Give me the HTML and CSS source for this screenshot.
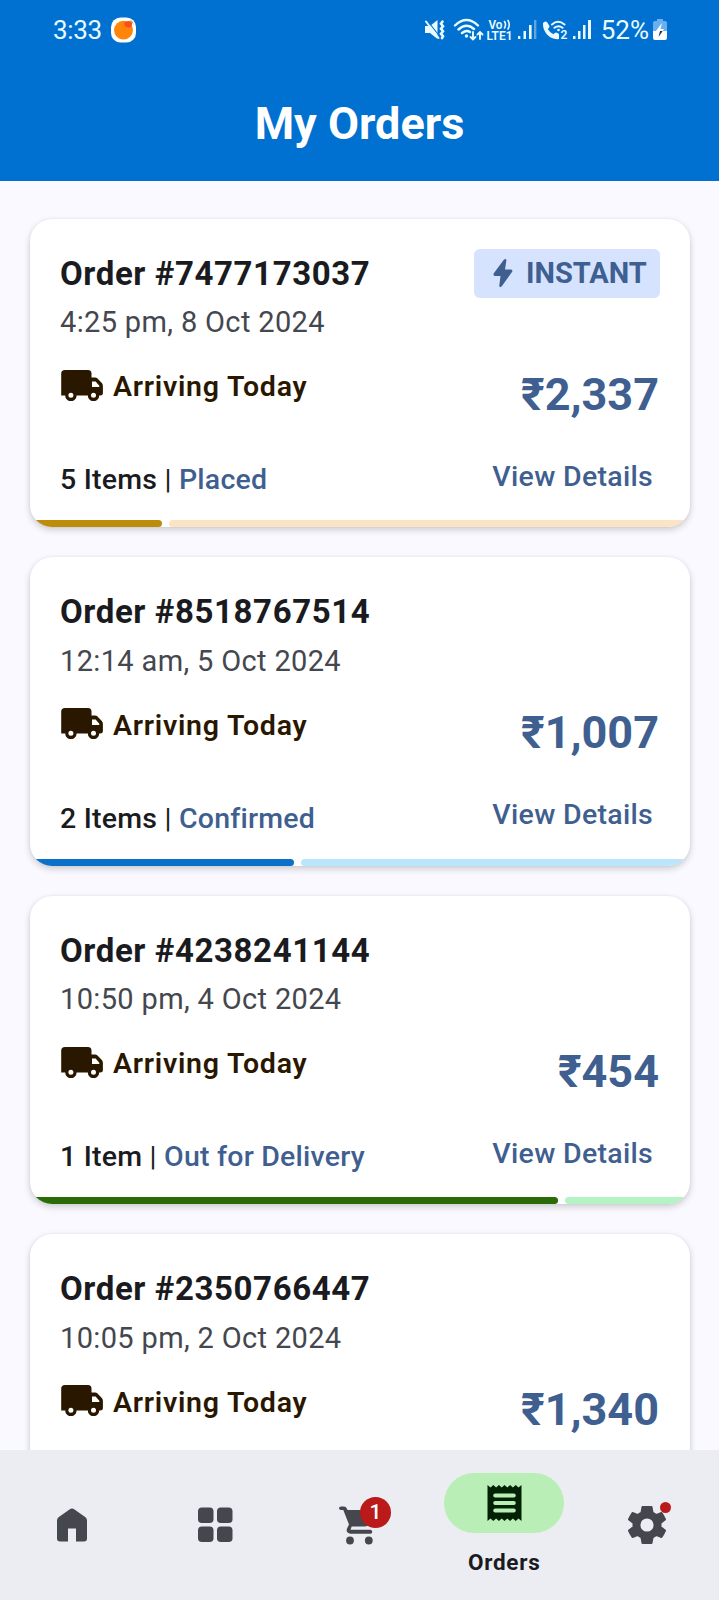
FILE: index.html
```html
<!DOCTYPE html>
<html lang="en">
<head>
<meta charset="utf-8">
<title>My Orders</title>
<link rel="stylesheet" href="styles.css">
</head>
<body>
<svg class="defs" width="0" height="0" aria-hidden="true">
  <symbol id="truck" viewBox="0 0 42 31">
    <path fill-rule="evenodd" d="M4 0H27Q30.500 0 30.500 3.500V7.500H34Q35.500 7.500 36.500 8.500L40.800 13Q41.900 14 41.900 16V23Q41.900 25.500 39 25.500H38.200A5.700 5.700 0 0 1 26.800 25.500H15.600A5.700 5.700 0 0 1 4.200 25.500H.2V3.500Q.2 0 4 0ZM31 11.500V17H38.300V15.800L34.600 11.500ZM9.900 22.800A2.500 2.500 0 1 0 9.900 27.800A2.500 2.500 0 1 0 9.900 22.800ZM32.500 22.800A2.500 2.500 0 1 0 32.500 27.800A2.500 2.500 0 1 0 32.500 22.800Z"/>
  </symbol>
</svg>
<div class="screen">
  <header class="header">
    <div class="status">
      <span class="clock">3:33</span>
      <svg class="app-icon" width="25" height="26" viewBox="0 0 26 26"><rect width="26" height="26" rx="10" fill="#fff"/><circle cx="13" cy="13.200" r="9.800" fill="#ff8508"/><path d="M13.500 5.500Q17 2.500 21.500 4.500Q23 8.500 19.500 10.500Q14.500 11 13.500 5.500Z" fill="#ff4a20"/><path d="M19 2.500Q23.500 3 23.600 8Q22 5 19 2.500Z" fill="#a8bd3a"/></svg>
      <div class="status-right">
        <svg width="118" height="24" viewBox="424 18 118 24" fill="none" stroke="#e9fbff" stroke-linecap="round">
          <path d="M425 26H430L437.500 20V39L430 33H425Z" fill="#e9fbff" stroke="none"/>
          <path d="M428 21.500L439 35.500" stroke="#0071d0" stroke-width="1.200" stroke-linecap="butt"/><path d="M426 21.500L438.500 38" stroke-width="2"/>
          <path d="M442.500 21.500l-1.500 2.200l2 2.500l-2 2.500l2 2.500l-2 2.500l2 2.500l-1 2" stroke-width="2.600"/>
          <path d="M455 25.500Q466.500 14.500 478 25.500M458.500 29.500Q466.500 22.500 474 29M462 33Q466.500 29.500 470 32" stroke-width="2.400"/>
          <circle cx="466.500" cy="36" r="1.700" fill="#e9fbff" stroke="none"/>
          <path d="M473 32V39M470.500 37L473 39.500L475.500 37M480 39V32.500M477.500 34.500L480 32L482.500 34.500" stroke-width="1.900"/>
          <g fill="#e9fbff" stroke="none"><rect x="518" y="36" width="2.300" height="3"/><rect x="523.500" y="31" width="2.500" height="8"/><rect x="529" y="25" width="2.600" height="14"/><rect x="534" y="20" width="2.400" height="19" opacity=".4"/></g>
          <text x="488.500" y="28.800" class="tiny" textLength="14" lengthAdjust="spacingAndGlyphs">Vo</text>
          <path d="M504.500 21.500Q506.500 24.500 504.500 28M508 20.500Q510.500 24.500 508 29" stroke-width="1.600"/>
          <text x="486.500" y="40" class="tiny" textLength="26" lengthAdjust="spacingAndGlyphs">LTE1</text>
        </svg>
        <svg width="52" height="24" viewBox="542 18 52 24" fill="none" stroke="#e9fbff" stroke-linecap="round">
          <path d="M543 23Q545 20.500 547 22L549.500 26Q549.500 28 547.800 29Q549.500 32.500 553.500 34.200Q555 32 557 32.700L559 34V39Q552.500 40 547 34.500Q542.500 29 543 23Z" fill="#e9fbff" stroke="none"/>
          <path d="M552 24.500Q558 19 564.500 24.500M554.500 27.800Q558.500 24.800 562.500 27.800" stroke-width="2"/><circle cx="558.500" cy="30" r="1.300" fill="#e9fbff" stroke="none"/>
          <text x="560.500" y="39" class="tiny">2</text>
          <g fill="#e9fbff" stroke="none"><rect x="573" y="36" width="2.500" height="3"/><rect x="578" y="31" width="2.500" height="8"/><rect x="583" y="25" width="2.500" height="14"/><rect x="588" y="20" width="3" height="19"/></g>
        </svg>
        <span class="percent">52%</span>
        <svg width="14" height="22" viewBox="0 0 14 22"><path d="M4 0H10V2H12Q14 2 14 4V12H0V4Q0 2 2 2H4Z" fill="#6ab0ee"/><path d="M0 12H14V19Q14 21 12 21H2Q0 21 0 19Z" fill="#fff"/><path d="M9 4L3 12H7L5.500 18L11 10H7.500Z" fill="#fff"/><path d="M5.500 18L9.700 12H7Z" fill="#16334f"/></svg>
      </div>
    </div>
    <h1 class="title">My Orders</h1>
  </header>

  <main class="orders">
    <article class="card">
      <div class="card-top"><h2 class="order">Order #7477173037</h2>
        <span class="badge"><svg width="20" height="30" viewBox="0 0 20 30"><path d="M11 1.500Q13.700 0 13.300 3L12 11.500H18Q20.300 12 19 14L9 28Q6.500 30.500 6.300 27.500L7.500 18H2Q-.5 17.300 1 15Z" fill="currentColor"/></svg>INSTANT</span></div>
      <p class="date">4:25 pm, 8 Oct 2024</p>
      <div class="card-main">
        <div class="info"><p class="arrival"><svg class="truck"><use href="#truck"/></svg>Arriving Today</p>
          <p class="items">5 Items <span class="bar">|</span> <span class="state">Placed</span></p></div>
        <div class="side"><strong class="price">₹2,337</strong><a class="details">View Details</a></div>
      </div>
      <div class="progress placed"><i style="width:132px"></i><b></b></div>
    </article>
    <article class="card">
      <div class="card-top"><h2 class="order">Order #8518767514</h2></div>
      <p class="date">12:14 am, 5 Oct 2024</p>
      <div class="card-main">
        <div class="info"><p class="arrival"><svg class="truck"><use href="#truck"/></svg>Arriving Today</p>
          <p class="items">2 Items <span class="bar">|</span> <span class="state">Confirmed</span></p></div>
        <div class="side"><strong class="price">₹1,007</strong><a class="details">View Details</a></div>
      </div>
      <div class="progress confirmed"><i style="width:264px"></i><b></b></div>
    </article>
    <article class="card">
      <div class="card-top"><h2 class="order">Order #4238241144</h2></div>
      <p class="date">10:50 pm, 4 Oct 2024</p>
      <div class="card-main">
        <div class="info"><p class="arrival"><svg class="truck"><use href="#truck"/></svg>Arriving Today</p>
          <p class="items">1 Item <span class="bar">|</span> <span class="state">Out for Delivery</span></p></div>
        <div class="side"><strong class="price">₹454</strong><a class="details">View Details</a></div>
      </div>
      <div class="progress delivery"><i style="width:528px"></i><b></b></div>
    </article>
    <article class="card">
      <div class="card-top"><h2 class="order">Order #2350766447</h2></div>
      <p class="date">10:05 pm, 2 Oct 2024</p>
      <div class="card-main">
        <div class="info"><p class="arrival"><svg class="truck"><use href="#truck"/></svg>Arriving Today</p></div>
        <div class="side"><strong class="price">₹1,340</strong></div>
      </div>
    </article>
  </main>

  <nav class="nav">
    <a class="tab"><svg width="32" height="34" viewBox="0 0 32 34"><path d="M13.500 1.500Q16 -.3 18.500 1.500L29.500 9.200Q31 10.400 31 12.500V30.500Q31 33.500 28 33.500H20V20.500H12V33.500H4Q1 33.500 1 30.500V12.500Q1 10.400 2.500 9.200Z" fill="currentColor"/></svg></a>
    <a class="tab"><svg width="36" height="36" viewBox="0 0 36 36" fill="currentColor"><rect x="1" y=".5" width="15.500" height="15.500" rx="3.800"/><rect x="20" y=".5" width="15.500" height="15.500" rx="3.800"/><rect x="1" y="19.500" width="15.500" height="15.500" rx="3.800"/><rect x="20" y="19.500" width="15.500" height="15.500" rx="3.800"/></svg></a>
    <a class="tab cart"><span class="icon-wrap"><svg width="38" height="40" viewBox="0 0 38 40" fill="currentColor"><path d="M2 1.500H5Q7 1.500 7.800 3.500L8.500 5H34Q37 5.500 35.500 8.500L30 19Q28.700 21.500 26 21.500H12.700L11.500 24.800H31.500Q33.300 25.300 33.300 26.900Q33.300 28.700 31.500 28.700H11.500Q6.500 28 8 23.500L10 19.500L4.300 5H2Q0 4.700 0 3.300Q0 1.700 2 1.500Z"/><circle cx="11" cy="35.500" r="3.900"/><circle cx="29.800" cy="35.500" r="3.900"/></svg><span class="count">1</span></span></a>
    <a class="tab active"><span class="pill"><svg width="35" height="38" viewBox="0 0 35 38"><path d="M.5 1L3.500 3.500L6.300 1L9.100 3.500L11.900 1L14.700 3.500L17.500 1L20.300 3.500L23.100 1L25.900 3.500L28.700 1L31.500 3.500L34.500 1V37L31.500 34.500L28.700 37L25.900 34.500L23.100 37L20.300 34.500L17.500 37L14.700 34.500L11.900 37L9.100 34.500L6.300 37L3.500 34.500L.5 37Z" fill="#022105"/><path d="M8.200 11.500H26.800M8.200 19H26.800M8.200 26.500H26.800" stroke="#b9efb6" stroke-width="4" stroke-linecap="round"/></svg></span><span class="label">Orders</span></a>
    <a class="tab"><span class="icon-wrap"><svg width="38" height="38" viewBox="0 0 38 38"><path fill-rule="evenodd" fill="currentColor" stroke="currentColor" stroke-width="2" stroke-linejoin="round" d="M14.500 1H23.500L24.500 6.500L28.500 9L33.500 7Q35.500 10 37 13.500L32.500 17V21L37 24.500Q35.500 28 33.500 31L28.500 29L24.500 31.500L23.500 37H14.500L13.500 31.500L9.500 29L4.500 31Q2.500 28 1 24.500L5.500 21V17L1 13.500Q2.500 10 4.500 7L9.500 9L13.500 6.500ZM19 11.400A7.600 7.600 0 1 0 19 26.600A7.600 7.600 0 1 0 19 11.400Z"/></svg><span class="dot"></span></span></a>
  </nav>
</div>
</body>
</html>
```
FILE: styles.css
```css
* { box-sizing: border-box; margin: 0; padding: 0; }
body { font-family: Roboto, "Liberation Sans", sans-serif; background: #f9f9ff; }
.defs { display: block; }
.screen { height: 1600px; display: flex; flex-direction: column; overflow: hidden; }

.header { flex: none; height: 181px; background: #0071d0; color: #fff; }
.status { height: 60px; padding: 0 52px 0 53px; display: flex; align-items: center; color: #e9fbff; }
.clock { font-size: 26px; letter-spacing: -.3px; }
.app-icon { margin-left: 9px; }
.status-right { margin-left: auto; display: flex; align-items: center; }
.percent { font-size: 26px; margin: 0 4px 0 7px; }
.tiny { font: 600 12px Roboto, sans-serif; fill: #e9fbff; stroke: none; }
.title { font-size: 45px; line-height: 52px; font-weight: 700; text-align: center; margin-top: 38px; }

.orders { flex: 1; min-height: 0; overflow: hidden; padding: 37.500px 29px 0 30px; }
.card { height: 308.500px; margin-bottom: 30px; padding: 30px 30px 0; border-radius: 22px; background: #fff; display: flex; flex-direction: column; overflow: hidden; box-shadow: 0 3px 7px rgba(0,0,0,.18), 0 0 3px rgba(0,0,0,.06); }
.card-top { height: 49px; display: flex; justify-content: space-between; align-items: center; }
.order { font-size: 33px; line-height: 49px; font-weight: 700; letter-spacing: .6px; color: #1a1b20; }
.badge { width: 186px; height: 49px; border-radius: 6px; background: #d6e3ff; color: #3f5f90; font-size: 29px; font-weight: 700; display: flex; align-items: center; padding-left: 19px; gap: 13px; line-height: 52px; }
.date { font-size: 29px; line-height: 38px; margin-top: 5.500px; letter-spacing: .35px; color: #44474e; }
.card-main { display: flex; justify-content: space-between; }
.arrival { display: flex; align-items: center; font-size: 28.500px; font-weight: 600; line-height: 40px; margin-top: 26px; letter-spacing: .75px; color: #2a1700; }
.truck { width: 42px; height: 31px; margin: -4px 10px 0 1px; fill: #2a1700; }
.items { margin-top: 53px; font-size: 28.500px; line-height: 40px; font-weight: 500; letter-spacing: .22px; color: #1a1b20; white-space: nowrap; }
.bar { font-weight: 400; }
.state, .price, .details { color: #3f5f90; }
.side { display: flex; flex-direction: column; align-items: flex-end; }
.price { font-size: 45px; line-height: 52px; font-weight: 700; margin: 27.500px 1px 0 0; }
.details { font-size: 28.500px; line-height: 40px; font-weight: 500; margin: 36px 7px 0 0; letter-spacing: .3px; }
.progress { height: 7px; margin: auto -30px 0; display: flex; gap: 7px; }
.progress i { border-radius: 4px; }
.progress b { flex: 1; border-radius: 4px 0 0 4px; }
.placed i { background: #bb8d0b; }
.placed b { background: #fae4c5; }
.confirmed i { background: #0b70c8; }
.confirmed b { background: #bbe5fa; }
.delivery i { background: #296b08; }
.delivery b { background: #b5f3c4; }

.nav { flex: none; height: 150px; background: #ecedf3; display: flex; color: #44474e; }
.tab { flex: 1; display: flex; flex-direction: column; align-items: center; justify-content: center; }
.cart { padding-right: 2px; }
.tab.active { justify-content: flex-start; padding: 22.500px 0 0 1px; }
.icon-wrap { position: relative; display: flex; }
.count { position: absolute; left: 21px; top: -8px; width: 31px; height: 31px; border-radius: 50%; background: #ba1a1a; color: #fff; font-size: 21px; font-weight: 500; line-height: 31px; text-align: center; }
.dot { position: absolute; right: -5px; top: -4px; width: 11px; height: 11px; border-radius: 50%; background: #ba1a1a; }
.pill { width: 120px; height: 60px; border-radius: 30px; background: #b9efb6; display: flex; align-items: center; justify-content: center; }
.label { font-size: 22.500px; line-height: 30px; font-weight: 700; letter-spacing: .7px; margin-top: 14px; color: #1a1b20; }
```
